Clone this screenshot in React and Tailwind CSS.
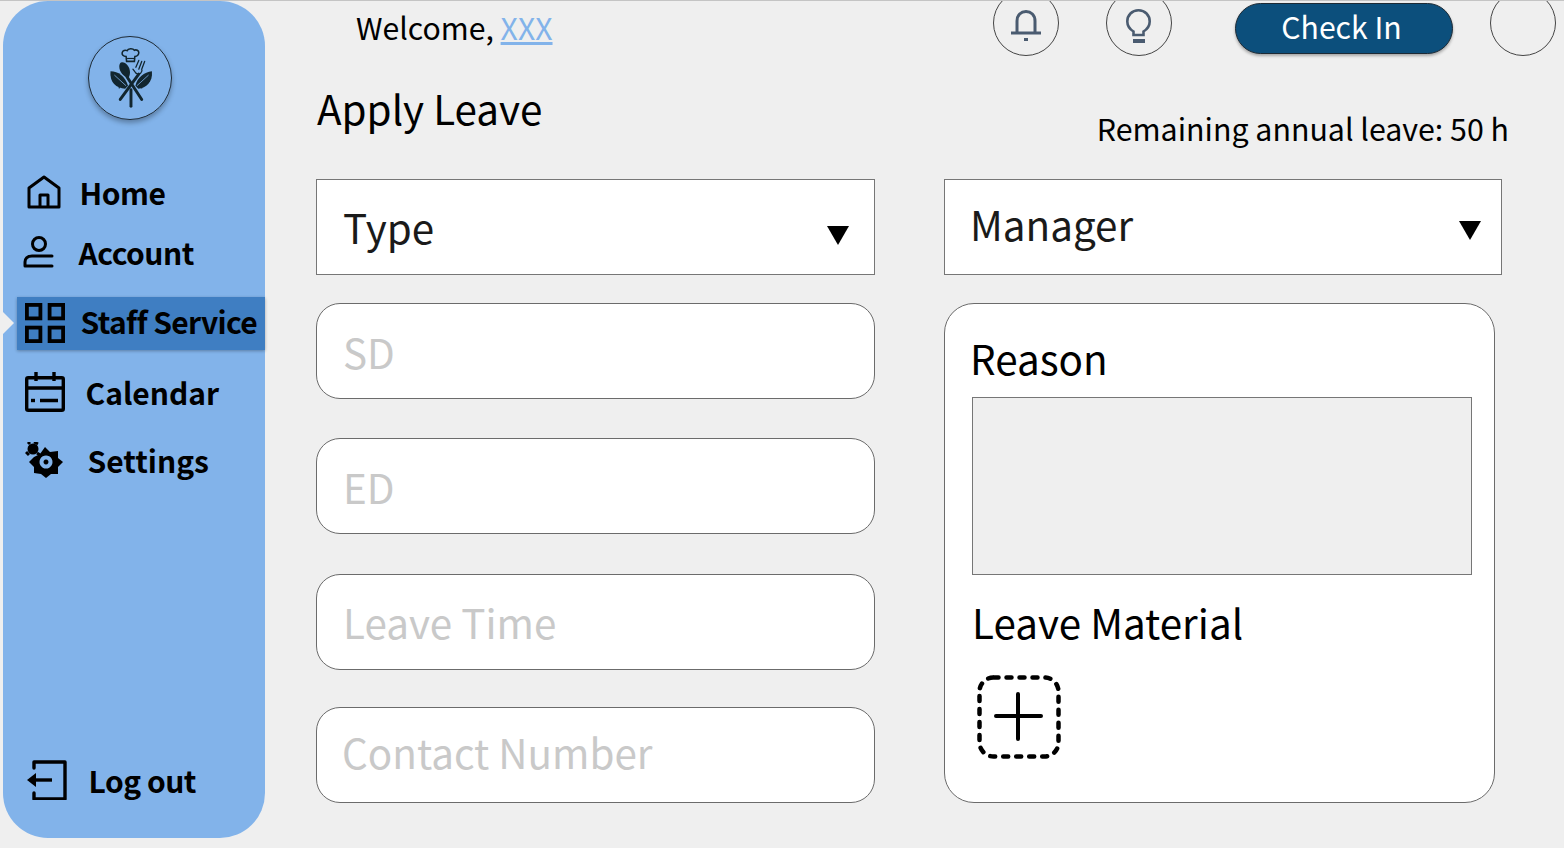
const font = { fontFamily: '"Noto Sans CJK SC", "Noto Sans", sans-serif' };

function Logo() {
  return (
    <svg viewBox="0 0 84 84" className="w-[84px] h-[84px]" fill="#12262f" stroke="none">
      {/* chef hat */}
      <path d="M38 20 c-3 0-4.500-2-4-4 c0.500-2 3-3 5-2 c1-2.500 6-2.500 7.500-0.500 c2-1 4.500 0.500 4.500 2.500 c0 2-1.500 4-4 4 l-0.500 5 h-8 Z" fill="none" stroke="#12262f" strokeWidth="1.6" />
      <path d="M39 22 H47" stroke="#12262f" strokeWidth="1.2" />
      {/* spoon */}
      <path d="M33 26 c4-1 9 4 9 10 c0 3-1 5-2 6 c-4-1-9-6-9-12 c0-2 1-4 2-4 Z" />
      <path d="M39 41 L54 64" stroke="#12262f" strokeWidth="3" strokeLinecap="round" />
      {/* fork */}
      <path d="M51 38 L32 64" stroke="#12262f" strokeWidth="3" strokeLinecap="round" />
      <path d="M45 33 l3 4 q3 2 5 0 q2-2 1-4 l3-8 M48 31 l3-7 M51 33 l3-8" fill="none" stroke="#12262f" strokeWidth="1.3" strokeLinecap="round" />
      {/* leaves */}
      <path d="M22 35 c8 0 15 5 18 15 l-3 3 c-9-1-16-6-15-18 Z" />
      <path d="M64.500 35 c-8 1-15 6-17 15 l3 3 c8-1 15-7 14-18 Z" />
      <path d="M26 39 L38 50 M61 39 L49 50" stroke="#82b3ea" strokeWidth="0.8" />
      <path d="M43 54 V71" stroke="#12262f" strokeWidth="3" strokeLinecap="round" />
      <circle cx="31" cy="52" r="0.8" />
      <circle cx="54" cy="52" r="0.8" />
    </svg>
  );
}

function HomeIcon() {
  return (
    <svg viewBox="0 0 34 34" className="w-[34px] h-[34px] shrink-0" fill="none" stroke="#000" strokeWidth="3">
      <path d="M2 32 V13 L17 2 L32 13 V32 Z M13 32 V20 H21 V32" strokeLinejoin="round" />
    </svg>
  );
}

function UserIcon() {
  return (
    <svg viewBox="0 0 32 34" className="w-[32px] h-[34px] shrink-0" fill="none" stroke="#000" strokeWidth="3">
      <circle cx="16" cy="9" r="6.500" />
      <path d="M29 21 H9 C4 21 2 24 2 27 V31 H29" strokeLinecap="round" strokeLinejoin="round" />
    </svg>
  );
}

function GridIcon() {
  return (
    <svg viewBox="0 0 40 40" className="w-[40px] h-[40px] shrink-0 -mt-[1px]" fill="none" stroke="#000" strokeWidth="3.800">
      <rect x="1.900" y="1.900" width="13.500" height="13.500" />
      <rect x="24.600" y="1.900" width="13.500" height="13.500" />
      <rect x="1.900" y="24.600" width="13.500" height="13.500" />
      <rect x="24.600" y="24.600" width="13.500" height="13.500" />
    </svg>
  );
}

function CalendarIcon() {
  return (
    <svg viewBox="0 0 40 40" className="w-[40px] h-[40px] shrink-0" fill="none" stroke="#000" strokeWidth="3.400">
      <rect x="1.700" y="5.700" width="36.600" height="32.600" rx="1.500" />
      <path d="M11 0 V9 M29 0 V9 M2 16 H38 M15 28.500 H33" />
      <path d="M6 28.500 H10" />
    </svg>
  );
}

function SettingsIcon() {
  return (
    <svg viewBox="0 0 38 36" className="w-[38px] h-[36px] shrink-0" fill="#000">
      <path fillRule="evenodd" d="M20 5 L25 10 L33 9 L33 16 L38 20 L33 25 L33 32 L26 32 L21 36 L16 32 L9 31 L9 25 L4 20 L9 15 L15 12 Z M21 13.500 a6.500 6.500 0 1 0 0.010 0 Z M21 17.500 a2.500 2.500 0 1 1 -0.010 0 Z" />
      <circle cx="8" cy="7" r="5.500" />
      <path d="M3 2 L5 0 M9 0 L13 2 M1 10 L4 13 M12 11 L15 13" stroke="#000" strokeWidth="3" />
    </svg>
  );
}

function LogoutIcon() {
  return (
    <svg viewBox="0 0 40 40" className="w-[40px] h-[40px] shrink-0" fill="none" stroke="#000" strokeWidth="3.400">
      <path d="M7 8 V2 H38 V39 H7 V33" strokeLinejoin="round" strokeLinecap="round" />
      <path d="M6 20 H25" />
      <path d="M0 20 L9 13 V27 Z" fill="#000" stroke="none" />
    </svg>
  );
}

function BellIcon() {
  return (
    <svg viewBox="0 0 30 31" className="w-[30px] h-[31px] mt-[5px]" fill="none" stroke="#4a5b70" strokeWidth="3">
      <path d="M6 23 V11 C6 5 10 1.500 15 1.500 C20 1.500 24 5 24 11 V23" />
      <path d="M0 23 H30" />
      <rect x="13" y="28" width="4" height="3" fill="#4a5b70" stroke="none" />
    </svg>
  );
}

function BulbIcon() {
  return (
    <svg viewBox="0 0 25 34" className="w-[25px] h-[34px] mt-[5px]" fill="none" stroke="#4a5b70" strokeWidth="2.600">
      <path d="M7.500 26 V22.500 C3.500 20 1.300 16.500 1.300 12.500 C1.300 6 6 1.300 12.500 1.300 C19 1.300 23.700 6 23.700 12.500 C23.700 16.500 21.500 20 17.500 22.500 V26 H7.500 Z" />
      <rect x="7" y="30" width="12" height="4" fill="#4a5b70" stroke="none" />
    </svg>
  );
}

function AddIcon() {
  return (
    <svg viewBox="0 0 84 84" className="w-[84px] h-[84px]" fill="none" stroke="#000" strokeWidth="4.500" strokeLinecap="round">
      <rect x="2.500" y="2.500" width="79" height="79" rx="14" strokeDasharray="5 8" />
      <path d="M19 41 H64 M41 19 V64" strokeWidth="4" />
    </svg>
  );
}

function NavItem({ icon, label, className, labelClass }) {
  return (
    <div className={`flex items-center font-bold text-[30px] leading-[40px] whitespace-nowrap text-black ${className}`}>
      {icon}
      <span className={labelClass}>{label}</span>
    </div>
  );
}

function SelectBox({ label, className, labelClass, arrowClass }) {
  return (
    <div className={`h-[96px] bg-white border border-[#767676] flex items-center justify-between ${className}`}>
      <span className={`text-[40.4px] leading-none text-[#1a1a1a] ${labelClass}`}>{label}</span>
      <svg viewBox="0 0 22 19" className={`w-[22px] h-[19px] ${arrowClass}`}><path d="M0 0 H22 L11 19 Z" fill="#000" /></svg>
    </div>
  );
}

function TextField({ placeholder, className }) {
  return (
    <input
      placeholder={placeholder}
      className={`block h-[96px] w-[559px] rounded-[24px] bg-white border border-[#6b6b6b] text-[40.4px] outline-none placeholder:text-[#c9c9c9] ${className}`}
    />
  );
}

export default function App() {
  return (
    <div style={font} className="w-[1564px] h-[848px] overflow-hidden bg-[#efefef] border-t border-[#c4c4c4] flex text-black">
      <aside className="relative ml-[2.5px] w-[262.5px] h-[837px] rounded-[45px] bg-[#82b3ea] flex flex-col shrink-0">
        <div className="ml-[85px] mt-[35px] w-[84px] h-[84px] rounded-full border-[1.5px] border-[#1d2a35] shadow-[0_3px_5px_rgba(0,0,0,0.3)] flex items-center justify-center shrink-0">
          <Logo />
        </div>
        <NavItem className="mt-[52px] ml-[24px] gap-[19px] tracking-[-0.5px]" icon={<HomeIcon />} label="Home" />
        <NavItem className="mt-[20px] ml-[20px] gap-[24px] tracking-[-0.5px]" icon={<UserIcon />} label="Account" />
        <NavItem
          className="mt-[25px] ml-[14px] h-[53px] pl-[8px] gap-[16px] bg-[#3f7ec2] shadow-[0_1px_3px_rgba(0,0,0,0.3)] tracking-[-0.65px]"
          labelClass="pb-[6px]"
          icon={<GridIcon />}
          label="Staff Service"
        />
        <span className="absolute left-0 top-[311px] border-y-[11px] border-y-transparent border-l-[11px] border-l-[#efefef]" />
        <NavItem className="mt-[22px] ml-[22px] gap-[21px]" icon={<CalendarIcon />} label="Calendar" />
        <NavItem className="mt-[28px] ml-[22px] gap-[25px]" icon={<SettingsIcon />} label="Settings" />
        <NavItem className="mt-auto mb-[38px] ml-[24px] gap-[22px] tracking-[-0.5px]" icon={<LogoutIcon />} label="Log out" />
      </aside>

      <main className="flex-1 pl-[51px]">
        <header className="flex items-start h-[89px]">
          <p className="ml-[40px] mt-[6px] text-[30.2px] leading-[40px] whitespace-nowrap">
            Welcome, <span className="text-[#82b3ea] underline">XXX</span>
          </p>
          <div className="ml-[440px] -mt-[11px] w-[66px] h-[66px] rounded-full border border-[#444] flex items-center justify-center shrink-0">
            <BellIcon />
          </div>
          <div className="ml-[47px] -mt-[11px] w-[66px] h-[66px] rounded-full border border-[#444] flex items-center justify-center shrink-0">
            <BulbIcon />
          </div>
          <button className="ml-[63px] mt-[2px] w-[218px] h-[51px] pb-[5px] pr-[4px] rounded-full bg-[#0c4f7c] border border-[#1d2a35] text-white text-[30.2px] leading-none shadow-[0_2px_3px_rgba(0,0,0,0.3)] shrink-0">
            Check In
          </button>
          <div className="ml-[37px] -mt-[11px] w-[66px] h-[66px] rounded-full border border-[#444] shrink-0" />
        </header>

        <div className="flex items-start justify-between h-[89px] pr-[55px]">
          <h1 className="ml-[1px] -mt-[4px] text-[40.4px] leading-[44px] font-normal">Apply Leave</h1>
          <p className="mt-[18px] text-[30.35px] leading-[40px]">Remaining annual leave: 50 h</p>
        </div>

        <div className="flex gap-[69px]">
          <div className="flex flex-col">
            <SelectBox className="w-[559px] pl-[26px]" label="Type" arrowClass="mt-[16px] mr-[25px]" />
            <TextField className="mt-[28px] pl-[26px]" placeholder="SD" />
            <TextField className="mt-[39px] pl-[26px]" placeholder="ED" />
            <TextField className="mt-[40px] pl-[26px] pb-[2px]" placeholder="Leave Time" />
            <TextField className="mt-[37px] pl-[25px] pb-[7px]" placeholder="Contact Number" />
          </div>
          <div className="flex flex-col">
            <SelectBox className="w-[558px] pl-[25px]" label="Manager" labelClass="pb-[6px]" arrowClass="mt-[6px] mr-[20px]" />
            <section className="mt-[28px] w-[551px] h-[500px] rounded-[30px] bg-white border border-[#6b6b6b] pl-[26px] pt-[27px]">
              <h2 className="-ml-[1px] text-[40.4px] leading-[54px] font-normal">Reason</h2>
              <div className="mt-[12px] ml-[1px] w-[500px] h-[178px] bg-[#efefef] border border-[#767676]" />
              <h2 className="mt-[20px] ml-[1px] text-[40.4px] leading-[54px] font-normal">Leave Material</h2>
              <button className="mt-[26px] ml-[6px] block">
                <AddIcon />
              </button>
            </section>
          </div>
        </div>
      </main>
    </div>
  );
}
